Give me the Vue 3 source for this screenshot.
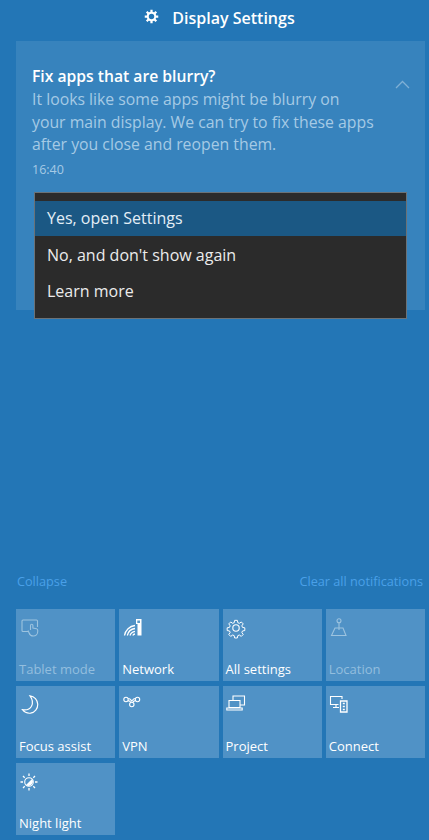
<template>
  <div class="panel">
    <header class="head">
      <svg class="head__icon" width="15" height="15" viewBox="0 0 16 16">
        <circle cx="8" cy="8" r="4" fill="none" stroke="#fff" stroke-width="2.2" />
        <path d="M8 .8v3M8 12.2v3M.8 8h3M12.2 8h3M2.9 2.9 5 5M11 11l2.1 2.1M13.1 2.9 11 5M5 11l-2.1 2.1" stroke="#fff" stroke-width="2.4" />
      </svg>
      <span>Display Settings</span>
    </header>

    <section class="card">
      <div class="card__text">
        <h1>Fix apps that are blurry?</h1>
        <p>It looks like some apps might be blurry on<br />your main display. We can try to fix these apps<br />after you close and reopen them.</p>
        <time>16:40</time>
      </div>
      <svg class="card__chevron" width="15" height="9" viewBox="0 0 15 9">
        <path d="M1 8 7.5 1.5 14 8" fill="none" stroke="#7fb0d5" stroke-width="1.3" />
      </svg>
      <ul class="menu">
        <li v-for="(item, i) in menuItems" :key="item" :class="{ active: i === 0 }">{{ item }}</li>
      </ul>
    </section>

    <div class="actions">
      <a>Collapse</a>
      <a>Clear all notifications</a>
    </div>

    <div class="tiles">
      <div class="tile" :class="{ off: t.off }" v-for="t in tiles" :key="t.label">
        <svg class="tile__icon" width="22" height="22" viewBox="0 0 22 22" fill="none" :stroke="t.off ? '#9cc3df' : '#fff'" stroke-width="1.1" v-html="t.icon"></svg>
        <span>{{ t.label }}</span>
      </div>
    </div>
  </div>
</template>

<script setup>
const menuItems = ['Yes, open Settings', "No, and don't show again", 'Learn more']

// icons are hand drawn to follow the Win10 action center glyphs
const tiles = [
  {
    label: 'Tablet mode',
    off: true,
    icon: '<path d="M9 13.5H4q-1 0-1-1V3q0-1 1-1h13.500q1 0 1 1v6"/><path d="M11.500 12V7.500a1.200 1.200 0 0 1 2.400 0V10l3.600.8q1.200.3 1.200 1.500v1.400a4.400 4.400 0 0 1-4.400 4.300 4.400 4.400 0 0 1-4.200-3L9 12.600"/>'
  },
  {
    label: 'Network',
    icon: '<path d="M2.500 17.500a12 12 0 0 1 10.500-10M5.300 17.500a9 9 0 0 1 7.700-7M8 17.500a6 6 0 0 1 5-4.200M10.800 17.500a3 3 0 0 1 2.200-1.500" stroke-width="1.300"/><path d="M14 1h5.500v16.500h-4V6H14z" fill="#fff" stroke="none"/><path d="M15.300 2.500h2.700v2.500h-2.700z" fill="#5a9ac9" stroke="none"/>'
  },
  {
    label: 'All settings',
    icon: '<circle cx="10" cy="10" r="3.200"/><path d="M8.500 1.500h3l.5 2.600 1.700.7 2.200-1.500 2.100 2.100-1.500 2.200.7 1.700 2.600.5v3l-2.600.5-.7 1.700 1.500 2.200-2.100 2.100-2.200-1.500-1.700.7-.5 2.600h-3l-.5-2.600-1.700-.7-2.200 1.500-2.100-2.100 1.500-2.200-.7-1.700-2.600-.5v-3l2.600-.5.7-1.700-1.500-2.200 2.100-2.100 2.200 1.500 1.700-.7z" transform="translate(1 1) scale(.9)"/>'
  },
  {
    label: 'Location',
    off: true,
    icon: '<circle cx="10" cy="2.700" r="2"/><path d="M10 4.700V12"/><path d="M6 10h8l3 7.500H2.500z"/>'
  },
  {
    label: 'Focus assist',
    icon: '<path d="M11 .8a8.800 8.800 0 0 1 .5 17.400q-5 .5-8-3.500 6.500 1 9-3.500 2.500-5-1.500-10.400z" stroke-width="1.200"/>'
  },
  {
    label: 'VPN',
    icon: '<circle cx="4" cy="4.500" r="2.200"/><circle cx="15.500" cy="4.500" r="2.200"/><circle cx="9.800" cy="9.500" r="2.200"/><path d="M6.200 3.500c2 0 2.500 1 3.600 2.500 1.100-1.500 1.700-2.500 3.500-2.500M6 5.600c2 .3 2.500 1 2.800 2M13.500 5.600c-2 .3-2.500 1-2.800 2"/>'
  },
  {
    label: 'Project',
    icon: '<path d="M7 5V1h11.500v9H14"/><path d="M3 5.500h11v7H3z"/><path d="M.8 13h15.400v2H.8z"/>'
  },
  {
    label: 'Connect',
    icon: '<path d="M9.500 9.500H1.500V1.500h11.500V4M4 12.500h6M7 9.500v3"/><path d="M11.500 6h6.500v11h-6.500z" stroke-width="1.300"/><path d="M13.800 8.500h2M13.800 11.500h2M13.800 14.500h2" stroke-width="1.700"/>'
  },
  {
    label: 'Night light',
    icon: '<circle cx="10" cy="10" r="4.300"/><path d="M7 13a4.300 4.300 0 0 0 6-6z" fill="#fff" stroke="none"/><path d="M10 1.500v2.500M10 16v2.500M1.500 10H4M16 10h2.500M4 4l1.700 1.700M14.300 14.300 16 16M16 4l-1.700 1.700M5.700 14.300 4 16" stroke-width="1.300"/>'
  }
]
</script>

<style scoped>
.panel {
  width: 429px;
  height: 840px;
  background: #2376b6;
  font-family: "Open Sans", "Noto Sans", sans-serif;
  color: #fff;
  overflow: hidden;
}

.head {
  height: 41px;
  display: flex;
  align-items: flex-start;
  justify-content: center;
  gap: 13px;
  padding-top: 8px;
  padding-left: 10px;
  box-sizing: border-box;
  font-size: 16px;
  font-weight: 600;
  line-height: 20px;
}
.head__icon {
  margin-top: 1px;
}

.card {
  position: relative;
  height: 269px;
  margin: 0 4px 0 16px;
  background: #3783bd;
  padding: 24px 16px 0;
  box-sizing: border-box;
}
.card__text {
  white-space: nowrap;
}
.card h1 {
  margin: 0;
  font-size: 15.700px;
  font-weight: 600;
  line-height: 23px;
}
.card p {
  margin: 0;
  font-size: 15.800px;
  line-height: 22.500px;
  color: #a5cae5;
}
.card time {
  display: block;
  margin-top: 5px;
  font-size: 12.500px;
  line-height: 18px;
  color: #a5cae5;
}
.card__chevron {
  position: absolute;
  top: 39px;
  right: 15px;
}

.menu {
  position: absolute;
  left: 18px;
  top: 151px;
  width: 373px;
  margin: 0;
  padding: 8px 0;
  box-sizing: border-box;
  height: 127px;
  list-style: none;
  background: #2b2b2b;
  border: 1px solid #6b7277;
  color: #ececec;
  font-size: 16px;
}
.menu li {
  height: 36.500px;
  line-height: 34px;
  padding-left: 12px;
}
.menu li.active {
  height: 34.500px;
  margin-bottom: 2px;
  background: #1b5884;
  color: #e3eef6;
}

.actions {
  display: flex;
  justify-content: space-between;
  margin: 262px 6px 0 17px;
  font-size: 12.700px;
  line-height: 18px;
  color: #4aa0e8;
}

.tiles {
  display: grid;
  grid-template-columns: repeat(4, 99.250px);
  grid-auto-rows: 72px;
  gap: 5px 4px;
  margin: 19px 0 0 16px;
}
.tile {
  background: #5092c6;
  display: flex;
  flex-direction: column;
  justify-content: space-between;
  padding: 9px 0 3px 3px;
  box-sizing: border-box;
  font-size: 13px;
  line-height: 18px;
}
.tile.off {
  color: #93bede;
}
.tile__icon {
  display: block;
}
</style>
